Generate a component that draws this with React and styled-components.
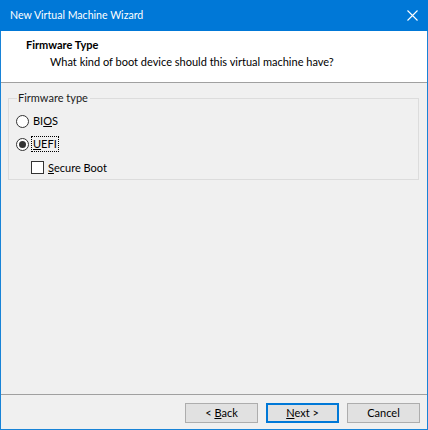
import React, { useState } from "react";
import styled, { createGlobalStyle } from "styled-components";

const GlobalStyle = createGlobalStyle`
  html, body {
    margin: 0;
    padding: 0;
    background: #ffffff;
  }
  body {
    font-family: Lato, "Liberation Sans", sans-serif;
    font-size: 11px;
    color: #000;
  }
`;

const Window = styled.div`
  width: 428px;
  height: 430px;
  box-sizing: border-box;
  border: 1px solid #1883d7;
  border-top: none;
  display: flex;
  flex-direction: column;
  background: #f0f0f0;
`;

const TitleBar = styled.div`
  height: 31px;
  margin: 0 -1px;
  background: #0078d7;
  color: #fff;
  display: flex;
  align-items: center;
  justify-content: space-between;
  padding: 0 0 1px 10px;
  box-sizing: border-box;
`;

const Title = styled.span`
  font-size: 10.6px;
`;

const CloseButton = styled.div`
  width: 31px;
  height: 30px;
  display: grid;
  place-items: center;
`;

const Header = styled.div`
  height: 52px;
  background: #fff;
  border-bottom: 1px solid #a0a0a0;
  box-sizing: border-box;
  padding: 6px 0 0 25px;
`;

const HeaderTitle = styled.div`
  font-weight: bold;
  line-height: 16px;
`;

const HeaderSub = styled.div`
  padding-left: 24px;
  line-height: 16px;
  margin-top: 1px;
`;

const Body = styled.div`
  flex: 1;
  padding: 8px 8px 0 7px;
`;

const GroupBox = styled.fieldset`
  margin: 0;
  height: 89px;
  box-sizing: border-box;
  border: 1px solid #dcdcdc;
  padding: 0 0 0 7px;
  display: flex;
  flex-direction: column;
`;

const Legend = styled.legend`
  padding: 0 2px 0 1px;
  margin-left: 1px;
  line-height: 14px;
  color: #1a1a1a;
`;

const Option = styled.label`
  display: flex;
  align-items: center;
  gap: 3px;
  height: 23px;
  padding-left: ${(p) => p.indent || 0}px;
  margin-top: ${(p) => p.top || 0}px;
`;

const Radio = styled.span`
  width: 11px;
  height: 11px;
  border: 1px solid #333;
  border-radius: 50%;
  background: #fff;
  display: grid;
  place-items: center;
  &::after {
    content: "";
    width: 7px;
    height: 7px;
    border-radius: 50%;
    background: ${(p) => (p.checked ? "#333" : "transparent")};
  }
`;

const Check = styled.span`
  width: 11px;
  height: 11px;
  border: 1px solid #333;
  background: #fff;
`;

const OptionText = styled.span`
  line-height: 14px;
  padding: 0 1px;
  outline: ${(p) => (p.focused ? "1px dotted #000" : "none")};
`;

const U = styled.span`
  text-decoration: underline;
`;

const Footer = styled.div`
  height: 35px;
  border-top: 1px solid #a0a0a0;
  display: flex;
  justify-content: flex-end;
  gap: 8px;
  padding: 8px 7px 0 0;
  box-sizing: border-box;
`;

const Button = styled.button`
  width: 73px;
  height: 20px;
  box-sizing: border-box;
  font-family: inherit;
  font-size: 11px;
  color: #000;
  background: #e1e1e1;
  border: ${(p) => (p.primary ? "2px solid #0078d7" : "1px solid #adadad")};
  padding: 0;
  line-height: 16px;
`;

export default function App() {
  const [mode, setMode] = useState("uefi");
  return (
    <>
      <GlobalStyle />
      <Window>
        <TitleBar>
          <Title>New Virtual Machine Wizard</Title>
          <CloseButton>
            <svg width="11" height="11" viewBox="0 0 11 11">
              <path d="M0.5 0.5L10.5 10.5M10.5 0.5L0.5 10.5" stroke="#fff" strokeWidth="1.1" />
            </svg>
          </CloseButton>
        </TitleBar>
        <Header>
          <HeaderTitle>Firmware Type</HeaderTitle>
          <HeaderSub>What kind of boot device should this virtual machine have?</HeaderSub>
        </Header>
        <Body>
          <GroupBox>
            <Legend>Firmware type</Legend>
            <Option top={5} onClick={() => setMode("bios")}>
              <Radio checked={mode === "bios"} />
              <OptionText focused={mode === "bios"}>
                BI<U>O</U>S
              </OptionText>
            </Option>
            <Option onClick={() => setMode("uefi")}>
              <Radio checked={mode === "uefi"} />
              <OptionText focused={mode === "uefi"}>
                <U>U</U>EFI
              </OptionText>
            </Option>
            <Option indent={15} top={1}>
              <Check />
              <OptionText>
                <U>S</U>ecure Boot
              </OptionText>
            </Option>
          </GroupBox>
        </Body>
        <Footer>
          <Button>
            &lt; <U>B</U>ack
          </Button>
          <Button primary>
            <U>N</U>ext &gt;
          </Button>
          <Button>Cancel</Button>
        </Footer>
      </Window>
    </>
  );
}
